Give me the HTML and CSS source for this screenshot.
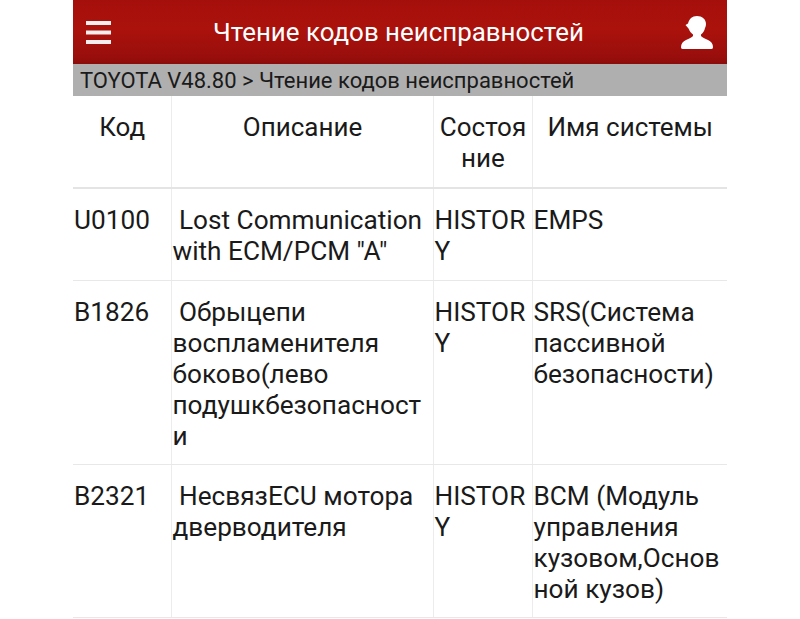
FILE: index.html
```html
<!DOCTYPE html>
<html>

<head>
    <title>Чтение кодов неисправностей</title>
    <link rel="stylesheet" href="styles.css">
</head>

<body>
    <div class="app">
        <div class="header">
            <svg class="menu-icon" viewBox="0 0 25 23" width="25" height="23">
                <rect x="0" y="0" width="25" height="4" fill="#f6eeee" />
                <rect x="0" y="9.500" width="25" height="4" fill="#f6eeee" />
                <rect x="0" y="19" width="25" height="4" fill="#f6eeee" />
            </svg>
            <div class="title">Чтение кодов неисправностей</div>
            <svg class="user-icon" viewBox="0 0 32 33" width="32" height="33">
                <path d="M16 0c5 0 9 3 9 8 0 1.500-.5 3-1 4-.5 3-2 5-4 6.500v1.500c1 1.500 4 2.500 7 4 3 1.500 5 3.500 5 7 0 1-.5 2-1.500 2H1.500C.5 33 0 32 0 31c0-3.500 2-5.500 5-7 3-1.500 6-2.500 7-4v-1.500c-2-1.500-3.500-3.500-4.500-6L4.500 9 7 7.500C8 3 11 0 16 0z" fill="#fff" />
            </svg>
        </div>
        <div class="breadcrumb">TOYOTA V48.80 &gt; Чтение кодов неисправностей</div>
        <table class="codes">
            <colgroup>
                <col class="col-code">
                <col class="col-desc">
                <col class="col-state">
                <col class="col-system">
            </colgroup>
            <thead>
                <tr>
                    <th>Код</th>
                    <th>Описание</th>
                    <th>Состоя<br>ние</th>
                    <th>Имя системы</th>
                </tr>
            </thead>
            <tbody>
                <tr class="row-one">
                    <td>U0100</td>
                    <td>&nbsp;Lost Communication<br>with ECM/PCM "A"</td>
                    <td>HISTOR<br>Y</td>
                    <td>EMPS</td>
                </tr>
                <tr class="row-two">
                    <td>B1826</td>
                    <td>&nbsp;Обрыцепи<br>воспламенителя<br>боково(лево<br>подушкбезопасност<br>и</td>
                    <td>HISTOR<br>Y</td>
                    <td>SRS(Система<br>пассивной<br>безопасности)</td>
                </tr>
                <tr class="row-three">
                    <td>B2321</td>
                    <td>&nbsp;НесвязECU мотора<br>дверводителя</td>
                    <td>HISTOR<br>Y</td>
                    <td>BCM (Модуль<br>управления<br>кузовом,Основ<br>ной кузов)</td>
                </tr>
            </tbody>
        </table>
    </div>
</body>

</html>
```

FILE: styles.css
```css
body {
    background-color: #fff;
    margin: 0;
    font-family: Roboto, "Liberation Sans", sans-serif;
    color: #1a1a1a;
}

.app {
    width: 654px;
    margin: 0 auto;
}

.header {
    height: 64px;
    background: linear-gradient(#a50f0b, #ab120c 45%, #980e0c 90%, #8a0c0a);
    display: flex;
    align-items: center;
    justify-content: space-between;
    padding: 0 14px 0 13px;
    box-sizing: border-box;
}

.title {
    color: #fff;
    font-size: 25.9px;
    flex: 1;
    text-align: center;
    padding-left: 5px;
}

.breadcrumb {
    height: 32px;
    line-height: 33px;
    background-color: #afafaf;
    font-size: 22px;
    padding-left: 7px;
    white-space: nowrap;
}

.codes {
    width: 654px;
    table-layout: fixed;
    border-collapse: collapse;
    font-size: 26.2px;
    line-height: 31px;
}

.col-code {
    width: 98px;
}

.col-desc {
    width: 262px;
}

.col-state {
    width: 99px;
}

.codes th,
.codes td {
    padding: 0;
    vertical-align: top;
    white-space: nowrap;
    border-left: 1px solid #ececec;
    border-bottom: 1px solid #e8e8e8;
}

.codes th:first-child,
.codes td:first-child {
    border-left: none;
}

.codes th {
    font-weight: normal;
    height: 75px;
    padding-top: 16px;
    padding-left: 1px;
    text-align: center;
    font-size: 26px;
    border-bottom: 2px solid #e4e4e4;
}

.codes td {
    padding-top: 16px;
    padding-left: 1px;
}

.row-one td {
    height: 75px;
}

.row-two td {
    height: 167px;
}

.row-three td {
    height: 136px;
}
```
